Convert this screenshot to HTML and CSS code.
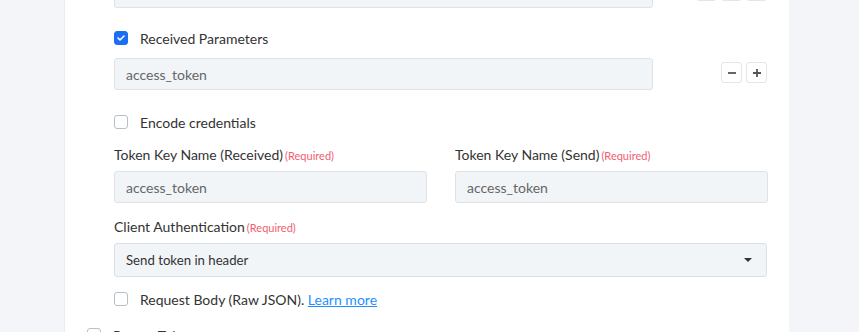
FILE: index.html
```html
<!DOCTYPE html>
<html>
<head>
<meta charset="utf-8">
<link rel="stylesheet" href="styles.css">
</head>
<body>
<div class="card">
  <div class="row-input row-top">
    <div class="input wide"></div>
    <div class="btns">
      <span class="sbtn"></span><span class="sbtn"></span><span class="sbtn"></span>
    </div>
  </div>

  <div class="check-row first">
    <span class="cb checked"><svg width="8" height="6" viewBox="0 0 8 6"><path d="M1 3l2 2 4-4" fill="none" stroke="#fff" stroke-width="1.6" stroke-linecap="round" stroke-linejoin="round"/></svg></span>
    <span class="cb-label">Received Parameters</span>
  </div>

  <div class="row-input r2">
    <div class="input wide">access_token</div>
    <div class="btns">
      <span class="sbtn"><svg width="10" height="10" viewBox="0 0 10 10"><path d="M1 5h8" stroke="#555" stroke-width="1.8"/></svg></span>
      <span class="sbtn"><svg width="10" height="10" viewBox="0 0 10 10"><path d="M1 5h8M5 1v8" stroke="#555" stroke-width="1.8"/></svg></span>
    </div>
  </div>

  <div class="check-row encode">
    <span class="cb"></span>
    <span class="cb-label">Encode credentials</span>
  </div>

  <div class="two-col">
    <div class="field">
      <div class="label">Token Key Name (Received)<span class="req">(Required)</span></div>
      <div class="input">access_token</div>
    </div>
    <div class="field">
      <div class="label">Token Key Name (Send)<span class="req">(Required)</span></div>
      <div class="input">access_token</div>
    </div>
  </div>

  <div class="field client">
    <div class="label">Client Authentication<span class="req">(Required)</span></div>
    <div class="select">Send token in header<span class="caret"></span></div>
  </div>

  <div class="check-row body-row">
    <span class="cb"></span>
    <span class="cb-label">Request Body (Raw JSON). <a class="link" href="#">Learn more</a></span>
  </div>

  <div class="check-row renew">
    <span class="cb"></span>
    <span class="cb-label">Renew Token</span>
  </div>
</div>
</body>
</html>
```
FILE: styles.css
```css
html, body {
  margin: 0;
  padding: 0;
  height: 100%;
  overflow: hidden;
}
body {
  background: #f3f5f8;
  font-family: Lato, "Noto Sans", Arial, sans-serif;
  color: #333;
}
.card {
  margin-left: 64px;
  width: 725px;
  height: 400px;
  background: #fff;
  border-left: 1px solid #e9ecf0;
  box-sizing: border-box;
  padding: 0 22px 0 49px;
}
.row-input {
  display: flex;
  align-items: flex-start;
}
.row-top { margin-top: -24px; }
.r2 { margin-top: 13px; }
.input {
  box-sizing: border-box;
  height: 32px;
  background: #f2f5f8;
  border: 1px solid #dfe2e7;
  border-radius: 3px;
  padding: 0 11px;
  display: flex;
  align-items: center;
  font-size: 14px;
  color: #666;
}
.wide { width: 539px; }
.btns {
  margin-left: auto;
  margin-top: 4px;
  display: flex;
  gap: 4px;
}
.sbtn {
  box-sizing: border-box;
  width: 21px;
  height: 21px;
  border: 1px solid #e2e5ea;
  border-radius: 3px;
  background: #fff;
  display: flex;
  align-items: center;
  justify-content: center;
}
.check-row {
  display: flex;
  align-items: center;
  height: 14px;
}
.first { margin-top: 23px; }
.encode { margin-top: 25px; }
.body-row { margin-top: 15px; }
.renew { margin-top: 22px; margin-left: -27px; }
.cb {
  box-sizing: border-box;
  width: 14px;
  height: 14px;
  border: 1px solid #b9bfc8;
  border-radius: 3px;
  background: #fff;
  display: flex;
  align-items: center;
  justify-content: center;
  flex: none;
}
.cb.checked {
  background: #1a6ff3;
  border-color: #1a6ff3;
}
.cb-label {
  margin-left: 12px;
  font-size: 14px;
  color: #333;
  white-space: nowrap;
}
.link {
  color: #1e90ff;
  text-decoration: underline;
}
.two-col {
  margin-top: 18px;
  display: grid;
  grid-template-columns: 313px 313px;
  column-gap: 28px;
}
.label {
  font-size: 14px;
  line-height: 16px;
  height: 16px;
  color: #333;
  margin-bottom: 8px;
  white-space: nowrap;
}
.req {
  font-size: 11px;
  color: #f0606f;
  margin-left: 2px;
}
.client { margin-top: 16px; }
.select {
  box-sizing: border-box;
  height: 34px;
  background: #f2f5f8;
  border: 1px solid #dcdfe6;
  border-radius: 3px;
  padding: 0 11px;
  display: flex;
  align-items: center;
  font-size: 13.2px;
  color: #333;
}
.caret {
  margin-left: auto;
  margin-right: 3px;
  width: 0;
  height: 0;
  border-left: 4px solid transparent;
  border-right: 4px solid transparent;
  border-top: 4px solid #333;
}
```
